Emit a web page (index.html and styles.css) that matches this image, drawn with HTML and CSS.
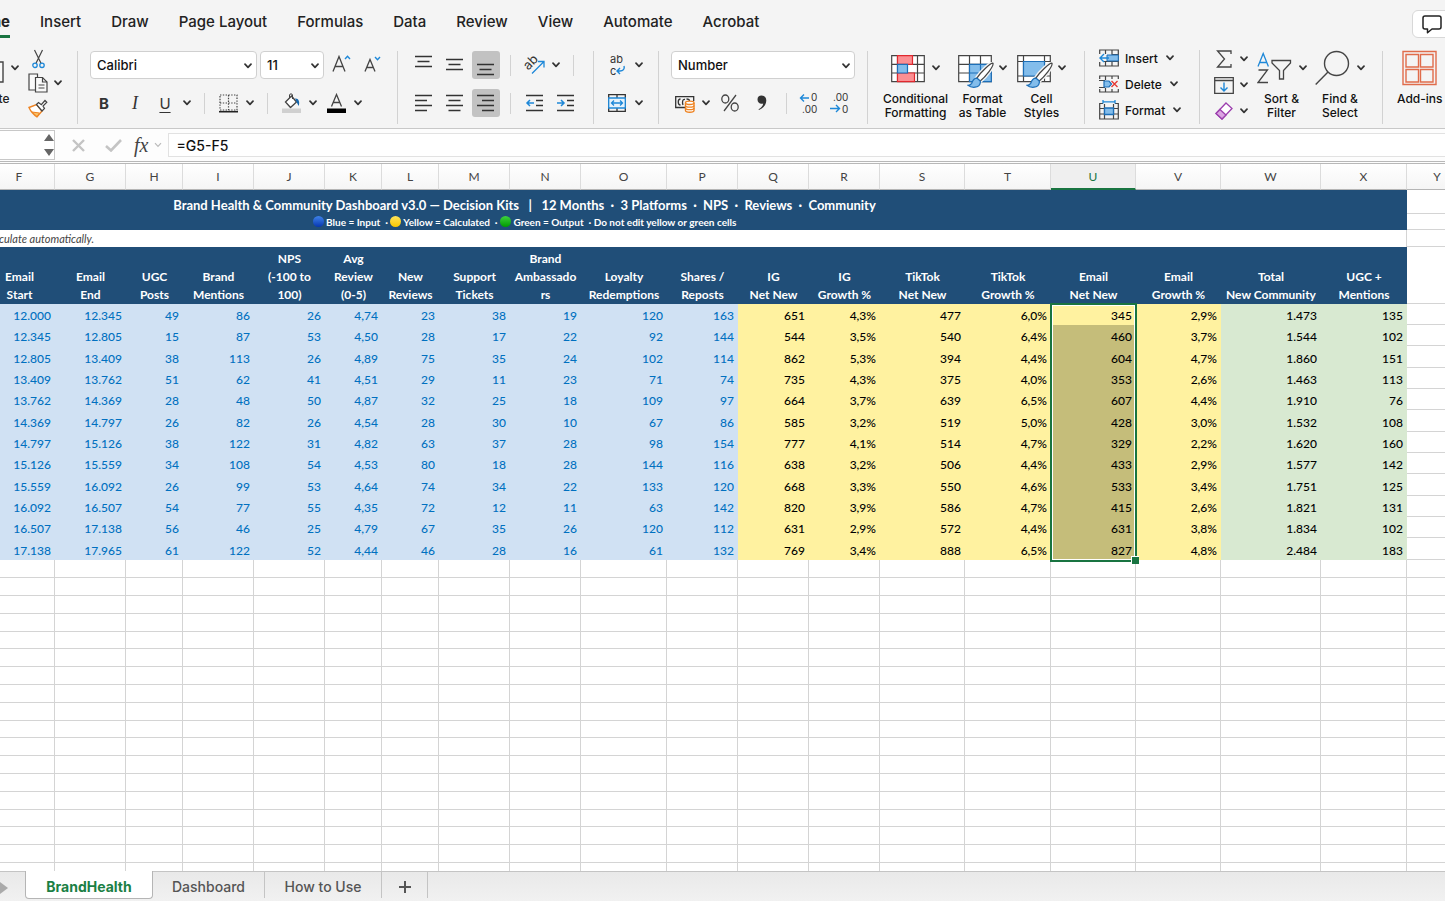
FILE: index.html
```html
<!DOCTYPE html>
<html lang="en">
<head>
    <meta charset="UTF-8">
    <meta name="viewport" content="width=device-width, initial-scale=1.0">
    <title>Brand Health Dashboard</title>
    <link rel="stylesheet" href="styles.css">
</head>
<body>
    <!-- shared icons -->
    <svg class="defs" width="0" height="0" aria-hidden="true">
        <symbol id="chev" viewBox="0 0 8 6"><path d="M1 1.2 4 4.4 7 1.2" fill="none" stroke="#333" stroke-width="1.7" stroke-linecap="round" stroke-linejoin="round"/></symbol>
        <symbol id="paint" viewBox="0 0 26 26">
            <path d="M25 1.200C23 .5 13 10 9.500 15.500L12.500 18.500C18 14 26 4 25 1.200Z" fill="#fff" stroke="#f4f4f4" stroke-width="4"/>
            <path d="M25 1.200C23 .5 13 10 9.500 15.500L12.500 18.500C18 14 26 4 25 1.200Z" fill="#fff" stroke="#444" stroke-width="1.200"/>
            <path d="M9.500 15.500C6 15.500 5.500 18 4.500 20.500 3.500 22 2 22.500 1 22.500 4 25 12 25.500 12.800 20 13 18.500 12.500 18 12.500 18Z" fill="#83bdeb" stroke="#1d6fb8" stroke-width="1.200"/>
        </symbol>
    </svg>

    <header class="menu-bar">
        <nav class="tabs">
            <a href="#" class="tab active">Home</a>
            <a href="#" class="tab">Insert</a>
            <a href="#" class="tab">Draw</a>
            <a href="#" class="tab">Page Layout</a>
            <a href="#" class="tab">Formulas</a>
            <a href="#" class="tab">Data</a>
            <a href="#" class="tab">Review</a>
            <a href="#" class="tab">View</a>
            <a href="#" class="tab">Automate</a>
            <a href="#" class="tab">Acrobat</a>
        </nav>
        <button class="comments" aria-label="Comments">
            <svg width="20" height="19" viewBox="0 0 20 19"><path d="M3 1h14a2 2 0 0 1 2 2v9a2 2 0 0 1-2 2H10l-4.500 3.800V14H3a2 2 0 0 1-2-2V3a2 2 0 0 1 2-2z" fill="none" stroke="#222" stroke-width="1.500" stroke-linejoin="round"/></svg>
        </button>
    </header>

    <div class="ribbon">
        <div class="group clipboard">
            <button class="paste">
                <span class="big-icon">
                    <svg width="36" height="32" viewBox="0 0 36 32"><path d="M19 10h16v20H19z" fill="#fafafa" stroke="#444" stroke-width="1.400"/></svg>
                    <svg class="chev"><use href="#chev"/></svg>
                </span>
                Paste
            </button>
            <div class="clip-tools">
                <button aria-label="Cut"><svg width="13" height="20" viewBox="0 0 13 20"><path d="M2.500 1 9 14.200M10.500 1 4 14.200" fill="none" stroke="#444" stroke-width="1.200"/><circle cx="3" cy="16.300" r="2.200" fill="none" stroke="#1e88d8" stroke-width="1.300"/><circle cx="10" cy="16.300" r="2.200" fill="none" stroke="#1e88d8" stroke-width="1.300"/></svg></button>
                <span></span>
                <button aria-label="Copy"><svg width="20" height="20" viewBox="0 0 20 20" fill="#f9f9f9" stroke="#444" stroke-width="1.200"><path d="M8 17H1V1h8.500v3"/><path d="M7.500 4.500h7L19 9v10H7.500z"/><path d="M14.500 4.500V9H19M10.500 12h6M10.500 15h6" fill="none"/></svg></button>
                <svg class="chev"><use href="#chev"/></svg>
                <button aria-label="Format Painter"><svg width="20" height="19" viewBox="0 0 20 19"><path d="M1 8.500 8.500 5.500 14 12 9 17.800C6 16 3 13 1 8.500Z" fill="#fff" stroke="#ee8322" stroke-width="1.400"/><path d="M4 13 11.500 14 9 17.500Z" fill="#f9c46a" stroke="#ee8322"/><path d="m8.500 5.500 2-2 2.800 2.200L17 1.500l1.800 1.800L15 7l1.500 2.500L14 12z" fill="#fff" stroke="#444" stroke-width="1.200"/></svg></button>
            </div>
        </div>

        <div class="group font">
            <div class="row">
                <label class="combo font-name"><select aria-label="Font"><option>Calibri</option></select><svg class="chev"><use href="#chev"/></svg></label>
                <label class="combo font-size"><select aria-label="Font size"><option>11</option></select><svg class="chev"><use href="#chev"/></svg></label>
                <button class="grow" aria-label="Increase font size"><svg width="19" height="20" viewBox="0 0 19 20" fill="none"><path d="M1 16.500 7 1.500 13 16.500M3.200 11.500h7.600" stroke="#444" stroke-width="1.300"/><path d="m13 4 2.500-2.700L18 4" stroke="#1e88d8" stroke-width="1.400"/></svg></button>
                <button class="grow" aria-label="Decrease font size"><svg width="19" height="20" viewBox="0 0 19 20" fill="none"><path d="M2 16.500 7 4.500 12 16.500M3.700 12.500h6.600" stroke="#444" stroke-width="1.300"/><path d="m12 2 2.500 2.700L17 2" stroke="#1e88d8" stroke-width="1.400"/></svg></button>
            </div>
            <div class="row font-grid">
                <button class="bold">B</button>
                <button class="italic">I</button>
                <button class="underline">U</button>
                <svg class="chev"><use href="#chev"/></svg>
                <i class="sep"></i>
                <button aria-label="Borders"><svg width="19" height="19" viewBox="0 0 19 19"><path d="M1 1h17v15H1zM9.500 1v15M1 9h17" fill="none" stroke="#444" stroke-width="1.200" stroke-dasharray="1.400 1.400"/><path d="M0 17.700h19" stroke="#222" stroke-width="1.600"/></svg></button>
                <svg class="chev"><use href="#chev"/></svg>
                <i class="sep"></i>
                <button aria-label="Fill Color"><svg width="19" height="20" viewBox="0 0 19 20"><path d="m3.500 9 6-6 5 6-6 5.500z" fill="#fff" stroke="#444" stroke-width="1.300"/><path d="M7.500 5V2c0-1.500 3-1.500 3 0v4" fill="none" stroke="#444"/><path d="M13 5.500c3.500-.5 5 3 3.700 7.500L14.800 9.500z" fill="#1667ad"/><path d="M0 15.500h19V20H0z" fill="#d0d0d0"/></svg></button>
                <svg class="chev"><use href="#chev"/></svg>
                <button aria-label="Font Color"><svg width="19" height="20" viewBox="0 0 19 20"><path d="M4.500 13.500 9.500 1.500l5 12M6.200 9.500h6.600" fill="none" stroke="#444" stroke-width="1.300"/><path d="M0 15.500h19V20H0z"/></svg></button>
                <svg class="chev"><use href="#chev"/></svg>
            </div>
        </div>

        <div class="group align">
            <div class="row align-grid">
                <button aria-label="Top Align"><svg class="lines" viewBox="0 0 18 18"><path d="M0 .5h17M2.500 5.500h12M0 10.500h17"/></svg></button>
                <button aria-label="Middle Align"><svg class="lines" viewBox="0 0 18 18"><path d="M0 3.500h17M2.500 8.500h12M0 13.500h17"/></svg></button>
                <button class="pressed" aria-label="Bottom Align"><svg class="lines" viewBox="0 0 18 18"><path d="M0 8.500h17M2.500 13.500h12M0 18.500h17"/></svg></button>
                <i class="sep"></i>
                <button aria-label="Orientation"><svg class="open" width="22" height="22" viewBox="0 0 22 22"><text x="1" y="13" font-size="13" fill="#333" transform="rotate(-45 7 11)">ab</text><path d="M8 19.500 19.500 8M14 7.500h6v6" fill="none" stroke="#1e88d8" stroke-width="1.300"/></svg></button>
                <svg class="chev"><use href="#chev"/></svg>
                <i class="sep"></i>
            </div>
            <div class="row align-grid">
                <button aria-label="Align Left"><svg class="lines" viewBox="0 0 18 18"><path d="M0 1.500h17M0 6.500h12M0 11.500h17M0 16.500h12"/></svg></button>
                <button aria-label="Center"><svg class="lines" viewBox="0 0 18 18"><path d="M0 1.500h17M2.500 6.500h12M0 11.500h17M2.500 16.500h12"/></svg></button>
                <button class="pressed" aria-label="Align Right"><svg class="lines" viewBox="0 0 18 18"><path d="M0 1.500h17M5 6.500h12M0 11.500h17M5 16.500h12"/></svg></button>
                <i class="sep"></i>
                <button aria-label="Decrease Indent"><svg class="lines" viewBox="0 0 18 18"><path d="M0 1.500h17M10 6.500h7M10 11.500h7M0 16.500h17"/><path class="blue" d="M8 9H1m3-3L1 9l3 3"/></svg></button>
                <button class="indent" aria-label="Increase Indent"><svg class="lines" viewBox="0 0 18 18"><path d="M0 1.500h17M10 6.500h7M10 11.500h7M0 16.500h17"/><path class="blue" d="M0 9h7M4 6l3 3-3 3"/></svg></button>
            </div>
        </div>

        <div class="group wrap">
            <div class="row wrap-grid">
                <button aria-label="Wrap Text"><svg class="open" width="18" height="20" viewBox="0 0 18 20"><text x="2" y="8" font-size="11" fill="#333">ab</text><text x="2" y="20" font-size="11" fill="#333">c</text><path d="M16 11c1 3-1 5-4 5H9m3-3-3 3 3 3" fill="none" stroke="#1e88d8" stroke-width="1.400"/></svg></button>
                <svg class="chev"><use href="#chev"/></svg>
            </div>
            <div class="row wrap-grid">
                <button aria-label="Merge"><svg width="18" height="18" viewBox="0 0 18 18" fill="none"><path d="M.7.700h16.600v16.600H.7zM9 1v3M9 14v3" stroke="#333" stroke-width="1.300"/><path d="M.7 4h16.600v10H.7z" fill="#e6f2fb" stroke="#1e88d8" stroke-width="1.300"/><path d="M3.500 9h11M6 6.500 3.500 9 6 11.500M12 6.500 14.500 9 12 11.500" stroke="#1e88d8" stroke-width="1.300"/></svg></button>
                <svg class="chev"><use href="#chev"/></svg>
            </div>
        </div>

        <div class="group number">
            <div class="row">
                <label class="combo format"><select aria-label="Number format"><option>Number</option></select><svg class="chev"><use href="#chev"/></svg></label>
            </div>
            <div class="row number-grid">
                <button aria-label="Accounting"><svg width="20" height="19" viewBox="0 0 20 19" fill="none"><path d="M10 13.500H.7V2.700h18V7" stroke="#333" stroke-width="1.300"/><path d="M5.500 5C2.500 5 2.500 11 5.500 11M10 5.500C7.500 5 7 8 8 11M11.500 5c2 0 3 .5 3 2" stroke="#333" stroke-width="1.300"/><path d="M10.500 9v7.500c0 2.300 8.500 2.300 8.500 0V9" fill="#fff" stroke="#ee8322" stroke-width="1.400"/><ellipse cx="14.750" cy="8.800" rx="4.250" ry="1.700" fill="#fff" stroke="#ee8322" stroke-width="1.400"/><path d="M10.500 11.500c0 2.200 8.500 2.200 8.500 0M10.500 14c0 2.200 8.500 2.200 8.500 0" stroke="#ee8322" stroke-width="1.300"/></svg></button>
                <svg class="chev"><use href="#chev"/></svg>
                <button aria-label="Percent"><svg width="18" height="18" viewBox="0 0 18 18" fill="none" stroke="#444" stroke-width="1.300"><path d="M15 1 3 17"/><ellipse cx="4.300" cy="5" rx="3.500" ry="4"/><ellipse cx="13.700" cy="13" rx="3.500" ry="4"/></svg></button>
                <button aria-label="Comma"><svg width="10" height="16" viewBox="0 0 10 16"><path d="M4.500.5C7.500.5 9.300 2.500 9.300 5.500 9.300 10 6 13.500 2 15L1.500 14.200C4 13 6 11 6.200 8.500 3 9.500.5 7.500.5 4.500.5 2 2 .5 4.500.5Z" fill="#333"/></svg></button>
                <i class="sep"></i>
                <button aria-label="Increase Decimal"><svg class="open" width="20" height="20" viewBox="0 0 20 20"><text x="12" y="8" font-size="10" fill="#333">0</text><text x="3" y="20" font-size="10" fill="#333">.00</text><path d="M10 5H1.500M5 1.500 1.500 5 5 8.500" fill="none" stroke="#1e88d8" stroke-width="1.400"/></svg></button>
                <button aria-label="Decrease Decimal"><svg class="open" width="20" height="20" viewBox="0 0 20 20"><text x="3" y="8" font-size="10" fill="#333">.00</text><text x="12" y="20" font-size="10" fill="#333">0</text><path d="M0 15.500h9.500M6 12l3.500 3.500L6 19" fill="none" stroke="#1e88d8" stroke-width="1.400"/></svg></button>
            </div>
        </div>

        <div class="group styles">
            <button class="big w71">
                <span class="big-icon">
                    <svg width="34" height="34" viewBox="0 0 34 34"><path d="M.7 4.700h32.600v26H.7zM.7 13.400h32.600M.7 22h32.600M6.500 4.700v26M26.500 4.700v26" fill="#fff" stroke="#444" stroke-width="1.200"/><path d="M6.500 4.700h15v8.700h-15zM6.500 22h17v8.700h-17z" fill="#fb8f93" stroke="#e0282e" stroke-width="1.200"/><path d="M6.500 13.400h10V22h-10z" fill="#83bdeb" stroke="#1d6fb8" stroke-width="1.200"/></svg>
                    <svg class="chev"><use href="#chev"/></svg>
                </span>
                Conditional<br>Formatting
            </button>
            <button class="big w63">
                <span class="big-icon">
                    <svg class="open" width="34" height="34" viewBox="0 0 34 34"><path d="M.7 4.700h32.600v26H.7zM.7 13.400h32.600M.7 22h32.600M11.500 4.700v26M22.500 4.700v26" fill="#fff" stroke="#444" stroke-width="1.200"/><path d="M11.500 13.400h21.800v17.300H11.500z" fill="#83bdeb"/><path d="M11.500 22h21.800M22.500 13.400v17.300M11.500 13.400h21.800v17.300H11.500z" fill="none" stroke="#1d6fb8" stroke-width="1.200"/><use href="#paint" x="9" y="11" width="27" height="27"/></svg>
                    <svg class="chev"><use href="#chev"/></svg>
                </span>
                Format<br>as Table
            </button>
            <button class="big w55">
                <span class="big-icon">
                    <svg class="open" width="34" height="34" viewBox="0 0 34 34"><path d="M.7 4.700h32.600v26H.7zM.7 10.500h32.600M.7 25h32.600M6.500 4.700v26M27.500 4.700v26" fill="#fff" stroke="#444" stroke-width="1.200"/><path d="M6.500 10.500h21V25h-21z" fill="#83bdeb" stroke="#1d6fb8" stroke-width="1.200"/><use href="#paint" x="9" y="11" width="27" height="27"/></svg>
                    <svg class="chev"><use href="#chev"/></svg>
                </span>
                Cell<br>Styles
            </button>
        </div>

        <div class="group cells">
            <button class="cell-btn"><svg width="20" height="18" viewBox="0 0 20 18"><path d="M.7 5V1h18.600v16H.7v-4M6.500 1v4M13 1v16M6.500 13v4M13 5.500h6M4 12.500h15" fill="none" stroke="#444" stroke-width="1.200"/><path d="M8 6h11.300v6H8z" fill="#83bdeb" stroke="#1d6fb8"/><path d="M10 9H1m4-4L1 9l4 4" fill="none" stroke="#1e88d8" stroke-width="1.400"/></svg>Insert<svg class="chev"><use href="#chev"/></svg></button>
            <button class="cell-btn"><svg width="20" height="18" viewBox="0 0 20 18"><path d="M.7 4V1h18.600v3M.7 14v3h18.600v-3M6.500 1v4M13 1v3M6.500 13v4M13 14v3M0 5.500h6M0 12.500h6" fill="none" stroke="#444" stroke-width="1.200"/><path d="M5 6h5l2.500 3L10 12H5z" fill="#83bdeb" stroke="#1d6fb8" stroke-width="1.200"/><path d="m12.500 6 6 6m0-6-6 6" stroke="#e53935" stroke-width="1.400"/></svg>Delete<svg class="chev"><use href="#chev"/></svg></button>
            <button class="cell-btn"><svg width="20" height="20" viewBox="0 0 20 20"><path d="M4 3.500H.7V19h18.600V3.500H16M5.500 4v15M14.500 4v15M.7 8.500h18.600M.7 14h18.600" fill="none" stroke="#444" stroke-width="1.200"/><path d="M5.500 8h9v6.500h-9z" fill="#83bdeb" stroke="#1d6fb8" stroke-width="1.300"/><path d="M4 1.800h12M4 0v3.500M16 0v3.500" stroke="#1e88d8" stroke-width="1.300"/></svg>Format<svg class="chev"><use href="#chev"/></svg></button>
        </div>

        <div class="group editing">
            <div class="edit-tools">
                <button aria-label="AutoSum"><svg width="16" height="18" viewBox="0 0 16 18"><path d="M15 4V1H1.500l7 8-7 8H15v-3" fill="none" stroke="#444" stroke-width="1.300"/></svg></button>
                <svg class="chev"><use href="#chev"/></svg>
                <button aria-label="Fill"><svg width="20" height="17" viewBox="0 0 20 17" fill="none"><path d="M.7.700h18.600v15.600H.7zM.7 3.500h18.600" stroke="#444" stroke-width="1.300"/><path d="M10 5.500V14M6.500 10.500 10 14l3.500-3.500" stroke="#1e88d8" stroke-width="1.400"/></svg></button>
                <svg class="chev"><use href="#chev"/></svg>
                <button aria-label="Clear"><svg width="18" height="18" viewBox="0 0 18 18"><path d="M11 1 17 6.500 7 17 1 11.500z" fill="#fff" stroke="#9c3fae" stroke-width="1.300"/><path d="M5 7.500 11 13l-4 4-6-5.500z" fill="#dba4e2" stroke="#9c3fae" stroke-width="1.300"/></svg></button>
                <svg class="chev"><use href="#chev"/></svg>
            </div>
            <button class="big w51">
                <span class="big-icon">
                    <svg width="35" height="34" viewBox="0 0 35 34" fill="none"><path d="M1 15.500 6.200 2.500l5.200 13M2.800 11.500h6.800" stroke="#1e88d8" stroke-width="1.300"/><path d="M1.500 19h9L1 31.500h10" stroke="#444" stroke-width="1.300"/><path d="M15 9.500h18.500v2.500l-7 7.500V28h-4v-8.500L15 12z" stroke="#444" stroke-width="1.300"/></svg>
                    <svg class="chev"><use href="#chev"/></svg>
                </span>
                Sort &amp;<br>Filter
            </button>
            <button class="big w66">
                <span class="big-icon">
                    <svg width="35" height="36" viewBox="0 0 35 36" fill="none" stroke="#444" stroke-width="1.400"><circle cx="21.500" cy="13.500" r="12"/><path d="M13 22 .7 34.500"/></svg>
                    <svg class="chev"><use href="#chev"/></svg>
                </span>
                Find &amp;<br>Select
            </button>
        </div>

        <div class="group addins">
            <button class="big">
                <span class="big-icon">
                    <svg width="35" height="36" viewBox="0 0 35 36" fill="none" stroke="#e06c4b" stroke-width="1.400"><path d="M1 1.500h33v33H1z"/><path d="M4 4.500h12.500v12.500H4zM18.500 4.500H31v12.500H18.500zM4 19.500h12.500V32H4zM18.500 19.500H31V32H18.500z"/></svg>
                </span>
                Add-ins
            </button>
        </div>
    </div>

    <div class="formula-bar">
        <div class="name-box"><svg width="10" height="22" viewBox="0 0 10 22"><path d="M0 7 5 0l5 7zM0 15h10l-5 7z" fill="#666"/></svg></div>
        <button aria-label="Cancel"><svg width="13" height="13" viewBox="0 0 13 13"><path d="m1 1 11 11M12 1 1 12" stroke="#c4c4c4" stroke-width="2.400"/></svg></button>
        <button aria-label="Enter"><svg width="17" height="13" viewBox="0 0 17 13"><path d="m1 7 5 4.500L16 1" fill="none" stroke="#c4c4c4" stroke-width="2.600"/></svg></button>
        <button class="fx">fx</button>
        <svg class="chev pale" viewBox="0 0 8 6"><path d="M1 1.200 4 4.400 7 1.200" fill="none" stroke="#bbb" stroke-width="1.200"/></svg>
        <input type="text" class="formula" aria-label="Formula" value="=G5-F5">
    </div>

    <main class="sheet">
        <table class="grid">
            <colgroup id="cols"></colgroup>
            <thead>
                <tr class="letters" id="letters"></tr>
            </thead>
            <tbody>
                <tr class="title-row">
                    <td class="banner" colspan="20">Brand Health &amp; Community Dashboard v3.0 — Decision Kits &nbsp;&nbsp;|&nbsp;&nbsp; 12 Months &nbsp;·&nbsp; 3 Platforms &nbsp;·&nbsp; NPS &nbsp;·&nbsp; Reviews &nbsp;·&nbsp; Community</td>
                    <td class="empty"></td>
                </tr>
                <tr class="legend-row">
                    <td class="banner" colspan="20"><i class="dot dot-blue"></i> Blue = Input &nbsp;· <i class="dot dot-yellow"></i> Yellow = Calculated &nbsp;· <i class="dot dot-green"></i> Green = Output &nbsp;· Do not edit yellow or green cells</td>
                    <td class="empty"></td>
                </tr>
                <tr class="note-row">
                    <td></td>
                    <td class="note" colspan="19">culate automatically.</td>
                    <td class="empty"></td>
                </tr>
                <tr class="head-row" id="heads"></tr>
            </tbody>
            <tbody id="data"></tbody>
            <tbody id="blank"></tbody>
        </table>
    </main>

    <footer class="sheet-tabs">
        <svg class="next" width="8" height="12" viewBox="0 0 8 12"><path d="M0 0 8 6 0 12z" fill="#aaa"/></svg>
        <a href="#" class="sheet-tab current">BrandHealth</a>
        <a href="#" class="sheet-tab dash">Dashboard</a>
        <a href="#" class="sheet-tab how">How to Use</a>
        <button class="add-sheet" aria-label="Add sheet"><svg width="12" height="12" viewBox="0 0 12 12"><path d="M6 0v12M0 6h12" stroke="#555" stroke-width="2"/></svg></button>
    </footer>

    <script src="script.js"></script>
</body>
</html>
```

FILE: styles.css
```css
* {
    box-sizing: border-box;
}
body {
    margin: 0;
    height: 100vh;
    display: flex;
    flex-direction: column;
    overflow: hidden;
    background: #f4f4f4;
    color: #222;
    font-family: Inter, "Liberation Sans", sans-serif;
    font-size: 12px;
}
button {
    display: flex;
    align-items: center;
    justify-content: center;
    padding: 0;
    border: 0;
    background: none;
    color: inherit;
    font: inherit;
}
a {
    color: inherit;
    text-decoration: none;
}
svg {
    display: block;
    flex: none;
}
.defs {
    position: absolute;
}
.open {
    overflow: visible;
}
.chev {
    width: 8px;
    height: 6px;
}

/* menu */
.menu-bar {
    display: flex;
    justify-content: space-between;
    height: 45px;
    flex: none;
}
.tabs {
    display: flex;
    gap: 30px;
    margin-left: -33px;
}
.tab {
    height: 38px;
    padding-top: 12px;
    font-size: 15px;
    line-height: 20px;
    font-weight: 500;
    white-space: nowrap;
}
.tab.active {
    font-weight: 700;
    border-bottom: 3px solid #197441;
}
.comments {
    width: 44px;
    height: 28px;
    margin: 10px -11px 0 0;
    padding-right: 4px;
    background: #fff;
    border: 1px solid #d8d8d8;
    border-radius: 6px;
}

/* ribbon */
.ribbon {
    display: flex;
    height: 84px;
    padding-bottom: 4px;
    flex: none;
    border-bottom: 1px solid #c8c8c8;
}
.group {
    flex: none;
    margin-top: 6px;
    border-right: 1px solid #d2d2d2;
}
.row {
    display: flex;
    align-items: center;
    height: 28px;
    margin-bottom: 10px;
}
.sep {
    width: 1px;
    height: 21px;
    background: #d2d2d2;
}
.clipboard {
    display: flex;
    width: 78px;
}
.paste {
    flex-direction: column;
    justify-content: flex-start;
    width: 51px;
    margin-left: -32px;
    line-height: 14px;
    font-weight: 500;
}
.clip-tools {
    display: grid;
    grid-template-columns: 26px 14px;
    grid-template-rows: 16px 32px 18px;
    align-items: center;
    justify-items: center;
    align-content: start;
    padding-left: 6px;
}
.font {
    width: 320px;
    padding-left: 12px;
}
.combo {
    position: relative;
    height: 28px;
}
.combo select {
    width: 100%;
    height: 28px;
    padding: 0 6px;
    appearance: none;
    background: #fff;
    border: 1px solid #d0d0d0;
    border-radius: 4px;
    font: 500 13px Inter, sans-serif;
    color: #111;
}
.combo .chev {
    position: absolute;
    right: 5px;
    top: 12px;
}
.font-name {
    width: 167px;
    margin-right: 3px;
}
.font-size {
    width: 64px;
}
.format {
    width: 184px;
}
.grow {
    margin-left: 8px;
}
.grow + .grow {
    margin-left: 12px;
}
.font-grid,
.align-grid,
.wrap-grid,
.number-grid {
    display: grid;
    justify-items: center;
    justify-content: start;
}
.font-grid {
    grid-template-columns: 28px 34px 26px 18px 16px 32px 12px 22px 27px 16px 31px 12px;
}
.bold,
.italic,
.underline {
    font-size: 15px;
    color: #333;
}
.bold {
    font-weight: 700;
}
.italic {
    font-family: "Liberation Serif", serif;
    font-style: italic;
    font-size: 18px;
}
.underline {
    text-decoration: underline;
    text-underline-offset: 3px;
    text-decoration-thickness: 1px;
}
.align {
    width: 196px;
    padding-left: 11px;
}
.align-grid {
    grid-template-columns: 30px 32px 30px 18px 32px 10px 24px;
}
.lines {
    width: 18px;
    height: 18px;
    overflow: visible;
    fill: none;
    stroke: #333;
    stroke-width: 1.3;
}
.lines .blue {
    stroke: #1e88d8;
    stroke-width: 1.5;
}
.pressed {
    width: 28px;
    height: 28px;
    background: #c2c2c2;
    border-radius: 3px;
}
.indent {
    grid-column: 6 / span 2;
    justify-self: start;
    margin-left: 6px;
}
.wrap {
    width: 65px;
    padding-left: 10px;
}
.wrap-grid {
    grid-template-columns: 26px 18px;
}
.number {
    width: 209px;
    padding-left: 12px;
}
.number-grid {
    grid-template-columns: 28px 14px 34px 30px 18px 28px 34px;
}
.styles {
    display: flex;
    width: 217px;
    padding-left: 12px;
}
.big {
    flex-direction: column;
    justify-content: flex-start;
    font-weight: 500;
    line-height: 14px;
    white-space: nowrap;
    color: #111;
}
.big-icon {
    display: flex;
    align-items: center;
    gap: 7px;
    height: 41px;
    padding-bottom: 8px;
}
.w71 {
    width: 71px;
}
.w63 {
    width: 63px;
}
.w55 {
    width: 55px;
}
.w51 {
    width: 51px;
}
.w66 {
    width: 66px;
}
.cells {
    width: 115px;
    padding-left: 14px;
}
.cell-btn {
    gap: 6px;
    height: 26px;
    font-weight: 500;
    color: #111;
}
.cell-btn .chev {
    margin-left: 2px;
}
.cells,
.edit-tools {
    margin-top: 0;
    border-image: linear-gradient(transparent 6px, #d2d2d2 6px) 1;
}
.editing {
    display: flex;
    width: 183px;
    padding-left: 13px;
}
.edit-tools {
    display: grid;
    grid-template-columns: 22px 18px;
    grid-template-rows: 16px 36px 16px;
    align-content: start;
    align-items: center;
    justify-items: center;
    margin-right: 3px;
}
.addins {
    padding-left: 14px;
    border: 0;
}

/* formula bar */
.formula-bar {
    display: flex;
    align-items: center;
    height: 35px;
    flex: none;
    background: #fdfdfd;
    border-bottom: 3px double #b8b8b8;
}
.name-box {
    display: flex;
    align-items: center;
    justify-content: flex-end;
    width: 55px;
    height: 30px;
    margin-right: 17px;
    background: #fff;
    border: 1px solid #c8c8c8;
    border-left: 0;
}
.formula-bar button + button {
    margin-left: 20px;
}
.formula-bar .fx {
    margin-left: 12px;
    font: italic 20px "Liberation Serif", serif;
    color: #444;
}
.pale {
    margin: 0 6px;
}
.formula {
    flex: 1;
    height: 24px;
    padding: 0 7px;
    border: 1px solid #e2e2e2;
    border-right: 0;
    background: #fff;
    font: 500 14px Inter, sans-serif;
    color: #111;
}

/* sheet, scrolled past columns A to E */
.sheet {
    flex: 1;
    min-height: 0;
    overflow: hidden;
    background: #fff;
    font-family: Lato, Calibri, sans-serif;
}
.grid {
    width: 1826px;
    margin-left: -358px;
    table-layout: fixed;
    border-collapse: separate;
    border-spacing: 0;
}
.grid th,
.grid td {
    padding: 0 3px;
}
.letters th {
    height: 26px;
    font-weight: 400;
    font-size: 12px;
    color: #444;
    background: linear-gradient(#fff, #f5f5f5);
    border-right: 1px solid #dcdcdc;
    border-bottom: 1px solid #b5b5b5;
}
.letters .selected {
    color: #197441;
    background: #efefef;
    border-bottom: 2px solid #197441;
}
.banner {
    background: #204e78;
    color: #fff;
    font-weight: 700;
    text-align: center;
    white-space: nowrap;
}
.empty {
    border-bottom: 1px solid #d4d4d4;
}
.grid .title-row td {
    height: 24px;
    font-size: 13px;
    line-height: 18px;
    padding-top: 6px;
}
.legend-row td {
    height: 16px;
    font-size: 10px;
    line-height: 14px;
}
.dot {
    display: inline-block;
    width: 11px;
    height: 11px;
    border-radius: 50%;
    vertical-align: -1px;
}
.dot-blue {
    background: linear-gradient(#3f83ea, #0636b0);
}
.dot-yellow {
    background: linear-gradient(#ffe45c, #f7c600);
}
.dot-green {
    background: linear-gradient(#3ed23e, #009a00);
}
.note-row td {
    height: 17px;
    line-height: 14px;
}
.grid .note {
    padding-left: 15px;
    font-size: 11px;
    font-style: italic;
    color: #444;
    border-right: 1px solid #d4d4d4;
}
.grid .head-row th {
    height: 57px;
    padding: 3px 0 0;
    background: #204e78;
    color: #fff;
    font-size: 12px;
    font-weight: 700;
    line-height: 18px;
    vertical-align: top;
    white-space: nowrap;
    vertical-align: bottom;
}
.grid #data td {
    height: 21px;
    padding: 3px 4px 0 0;
    line-height: 18px;
    font-size: 12px;
    font-weight: 500;
    text-align: right;
    color: #000;
}
.grid #data tr:nth-child(3n) td {
    height: 22px;
}
.grid #data .in {
    background: #d0e1f3;
    color: #0070c0;
}
#data .calc {
    background: #fff2a0;
}
#data .out {
    background: #d8e9d1;
}
#data .picked {
    background: #c5bd7a;
}
#data .anchor {
    position: relative;
}
.selection {
    position: absolute;
    top: -1px;
    left: -1px;
    width: 87px;
    height: 259px;
    border: 2px solid #197441;
    box-shadow: inset 0 0 0 1px #fff;
}
.selection::after {
    content: "";
    position: absolute;
    right: -4px;
    bottom: -4px;
    width: 7px;
    height: 7px;
    background: #197441;
    border: 1px solid #fff;
    border-width: 1px 0 0 1px;
}
#blank td {
    height: 18px;
    border-right: 1px solid #d4d4d4;
    border-bottom: 1px solid #d4d4d4;
}
#blank tr:nth-child(5n) td {
    height: 17px;
}

/* sheet tabs */
.sheet-tabs {
    display: flex;
    height: 30px;
    flex: none;
    background: linear-gradient(#e9e9e9, #f1f1f1);
    border-top: 1px solid #c4c4c4;
    font-size: 14px;
    font-weight: 500;
    color: #555;
}
.next {
    margin: 10px 17px 0 0;
}
.sheet-tab,
.add-sheet {
    display: flex;
    align-items: center;
    justify-content: center;
    height: 26px;
    padding-top: 3px;
    border-right: 1px solid #c4c4c4;
}
.sheet-tab.current {
    width: 128px;
    height: 28px;
    margin-top: -1px;
    background: #fff;
    border: 1px solid #b5b5b5;
    border-top: 0;
    border-radius: 0 0 4px 4px;
    color: #1b7f45;
    font-weight: 700;
}
.dash {
    width: 112px;
}
.how {
    width: 117px;
}
.add-sheet {
    width: 46px;
}
```

FILE: script.js
```js
// letter, width, heading, kind
const columns = [
    ['', 342, '', ''],
    ['F', 71, 'Email<br>Start', 'in'],
    ['G', 71, 'Email<br>End', 'in'],
    ['H', 57, 'UGC<br>Posts', 'in'],
    ['I', 71, 'Brand<br>Mentions', 'in'],
    ['J', 71, 'NPS<br>(-100 to<br>100)', 'in'],
    ['K', 57, 'Avg<br>Review<br>(0-5)', 'in'],
    ['L', 57, 'New<br>Reviews', 'in'],
    ['M', 71, 'Support<br>Tickets', 'in'],
    ['N', 71, 'Brand<br>Ambassado<br>rs', 'in'],
    ['O', 86, 'Loyalty<br>Redemptions', 'in'],
    ['P', 71, 'Shares /<br>Reposts', 'in'],
    ['Q', 71, 'IG<br>Net New', 'calc'],
    ['R', 71, 'IG<br>Growth %', 'calc'],
    ['S', 85, 'TikTok<br>Net New', 'calc'],
    ['T', 86, 'TikTok<br>Growth %', 'calc'],
    ['U', 85, 'Email<br>Net New', 'calc'],
    ['V', 85, 'Email<br>Growth %', 'calc'],
    ['W', 100, 'Total<br>New Community', 'out'],
    ['X', 86, 'UGC +<br>Mentions', 'out'],
    ['Y', 61, '', 'empty']
];

const rows = [
    '12.000 12.345 49 86 26 4,74 23 38 19 120 163 651 4,3% 477 6,0% 345 2,9% 1.473 135',
    '12.345 12.805 15 87 53 4,50 28 17 22 92 144 544 3,5% 540 6,4% 460 3,7% 1.544 102',
    '12.805 13.409 38 113 26 4,89 75 35 24 102 114 862 5,3% 394 4,4% 604 4,7% 1.860 151',
    '13.409 13.762 51 62 41 4,51 29 11 23 71 74 735 4,3% 375 4,0% 353 2,6% 1.463 113',
    '13.762 14.369 28 48 50 4,87 32 25 18 109 97 664 3,7% 639 6,5% 607 4,4% 1.910 76',
    '14.369 14.797 26 82 26 4,54 28 30 10 67 86 585 3,2% 519 5,0% 428 3,0% 1.532 108',
    '14.797 15.126 38 122 31 4,82 63 37 28 98 154 777 4,1% 514 4,7% 329 2,2% 1.620 160',
    '15.126 15.559 34 108 54 4,53 80 18 28 144 116 638 3,2% 506 4,4% 433 2,9% 1.577 142',
    '15.559 16.092 26 99 53 4,64 74 34 22 133 120 668 3,3% 550 4,6% 533 3,4% 1.751 125',
    '16.092 16.507 54 77 55 4,35 72 12 11 63 142 820 3,9% 586 4,7% 415 2,6% 1.821 131',
    '16.507 17.138 56 46 25 4,79 67 35 26 120 112 631 2,9% 572 4,4% 631 3,8% 1.834 102',
    '17.138 17.965 61 122 52 4,44 46 28 16 61 132 769 3,4% 888 6,5% 827 4,8% 2.484 183'
];

document.getElementById('cols').innerHTML = columns.map(c => `<col style="width: ${c[1]}px">`).join('');

document.getElementById('letters').innerHTML = columns.map(c =>
    `<th scope="col"${c[0] === 'U' ? ' class="selected"' : ''}>${c[0]}</th>`).join('');

document.getElementById('heads').innerHTML = columns.map(c =>
    c[3] === 'empty' ? '<td class="empty"></td>' : `<th scope="col">${c[2]}</th>`).join('');

document.getElementById('data').innerHTML = rows.map((row, r) => {
    const values = row.split(' ');
    const cells = columns.map((c, i) => {
        let cls = c[3];
        let extra = '';
        if (c[0] === 'U') {
            cls += r === 0 ? ' anchor' : ' picked';
            if (r === 0) extra = '<div class="selection"></div>';
        }
        return `<td class="${cls}">${values[i - 1] || ''}${extra}</td>`;
    });
    return `<tr>${cells.join('')}</tr>`;
}).join('');

// empty rows run on below the window
document.getElementById('blank').innerHTML =
    `<tr>${'<td></td>'.repeat(columns.length)}</tr>`.repeat(60);
```
